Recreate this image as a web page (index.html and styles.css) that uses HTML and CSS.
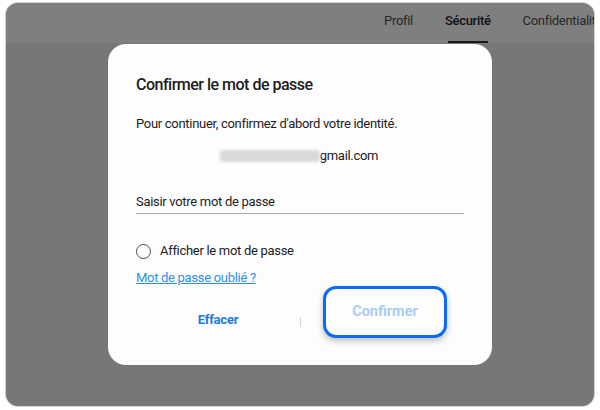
FILE: index.html
```html
<!DOCTYPE html>
<html lang="fr">
<head>
<meta charset="utf-8">
<link rel="stylesheet" href="styles.css">
</head>
<body>
<div class="frame">
  <div class="topbar">
    <nav class="tabs">
      <span class="tab">Profil</span>
      <span class="tab active">Sécurité</span>
      <span class="tab">Confidentialité</span>
    </nav>
  </div>
  <div class="content">
    <div class="dialog">
      <h1 class="title">Confirmer le mot de passe</h1>
      <p class="desc">Pour continuer, confirmez d'abord votre identité.</p>
      <div class="email"><span class="blur"></span><span>gmail.com</span></div>
      <div class="field">Saisir votre mot de passe</div>
      <label class="check"><span class="radio"></span>Afficher le mot de passe</label>
      <a class="link">Mot de passe oublié ?</a>
      <div class="actions">
        <button class="btn clear">Effacer</button>
        <span class="sep"></span>
        <div class="confirm-wrap"><button class="btn confirm">Confirmer</button></div>
      </div>
    </div>
  </div>
</div>
</body>
</html>
```
FILE: styles.css
```css
* { box-sizing: border-box; }
html, body { margin: 0; padding: 0; background: #ffffff; }
body {
  width: 600px;
  height: 410px;
  padding: 3px 6px 4px 6px;
  font-family: Roboto, "Noto Sans", "Liberation Sans", sans-serif;
  overflow: hidden;
}
.frame {
  width: 588px;
  height: 403px;
  border-radius: 12px;
  overflow: hidden;
  background: #777777;
  box-shadow: 0 0 0 1px #d4d4d4;
  display: flex;
  flex-direction: column;
}
.topbar {
  height: 40px;
  background: #7f7f7f;
  display: flex;
  flex-shrink: 0;
  overflow: hidden;
}
.tabs {
  display: flex;
  padding-left: 362px;
  letter-spacing: -0.3px;
}
.tab {
  font-size: 13px;
  color: #262626;
  padding: 10px 16px 0 16px;
  height: 40px;
  position: relative;
  white-space: nowrap;
}
.tab.active {
  font-weight: 500;
  color: #111;
}
.tab.active::after {
  content: "";
  position: absolute;
  left: 19px;
  right: 19px;
  bottom: 0;
  height: 2px;
  background: #1a1a1a;
}
.content {
  flex: 1;
  padding: 1px 0 0 102px;
}
.dialog {
  width: 384px;
  height: 321px;
  background: #fdfdfd;
  border-radius: 18px;
  padding: 30px 28px 0 28px;
  display: flex;
  flex-direction: column;
  color: #1c1c1c;
  letter-spacing: -0.3px;
}
.title {
  font-size: 16px;
  font-weight: 500;
  margin: 0;
  line-height: 22px;
  letter-spacing: -0.5px;
}
.desc {
  margin: 19px 0 0 0;
  font-size: 13px;
  line-height: 18px;
}
.email {
  margin-top: 14px;
  font-size: 13px;
  line-height: 18px;
  display: flex;
  justify-content: center;
  align-items: center;
  padding-right: 2px;
}
.blur {
  display: inline-block;
  width: 100px;
  height: 12px;
  background: #d9d9d9;
  border-radius: 4px;
  filter: blur(1.5px);
}
.field {
  margin-top: 28px;
  font-size: 13px;
  line-height: 18px;
  padding-bottom: 2px;
  border-bottom: 1px solid #a9a9a9;
}
.check {
  margin-top: 28px;
  display: flex;
  align-items: center;
  gap: 9px;
  font-size: 13px;
  line-height: 18px;
}
.radio {
  width: 15px;
  height: 15px;
  border: 1.5px solid #4a4a4a;
  border-radius: 50%;
}
.link {
  margin-top: 9px;
  font-size: 13px;
  line-height: 18px;
  color: #2b8ff0;
  text-decoration: underline;
  align-self: flex-start;
}
.actions {
  margin-top: -1px;
  display: flex;
  align-items: flex-start;
}
.btn {
  font-family: inherit;
  font-size: 13px;
  font-weight: 700;
  background: none;
  border: 0;
  letter-spacing: -0.2px;
}
.clear {
  width: 164px;
  color: #1a7ae0;
  padding: 26px 0 0 0;
}
.sep {
  width: 1px;
  height: 10px;
  background: #d6d6d6;
  margin-top: 31px;
}
.confirm-wrap {
  margin-left: 22px;
}
.confirm {
  width: 124px;
  height: 52px;
  border: 3px solid #0b6cf0;
  border-radius: 13px;
  background: #fdfdfd;
  color: #a9cdf6;
  font-size: 14.5px;
  letter-spacing: 0;
  padding: 0 0 1px 0;
  box-shadow: 0 3px 6px rgba(0,0,0,0.25);
}
```
